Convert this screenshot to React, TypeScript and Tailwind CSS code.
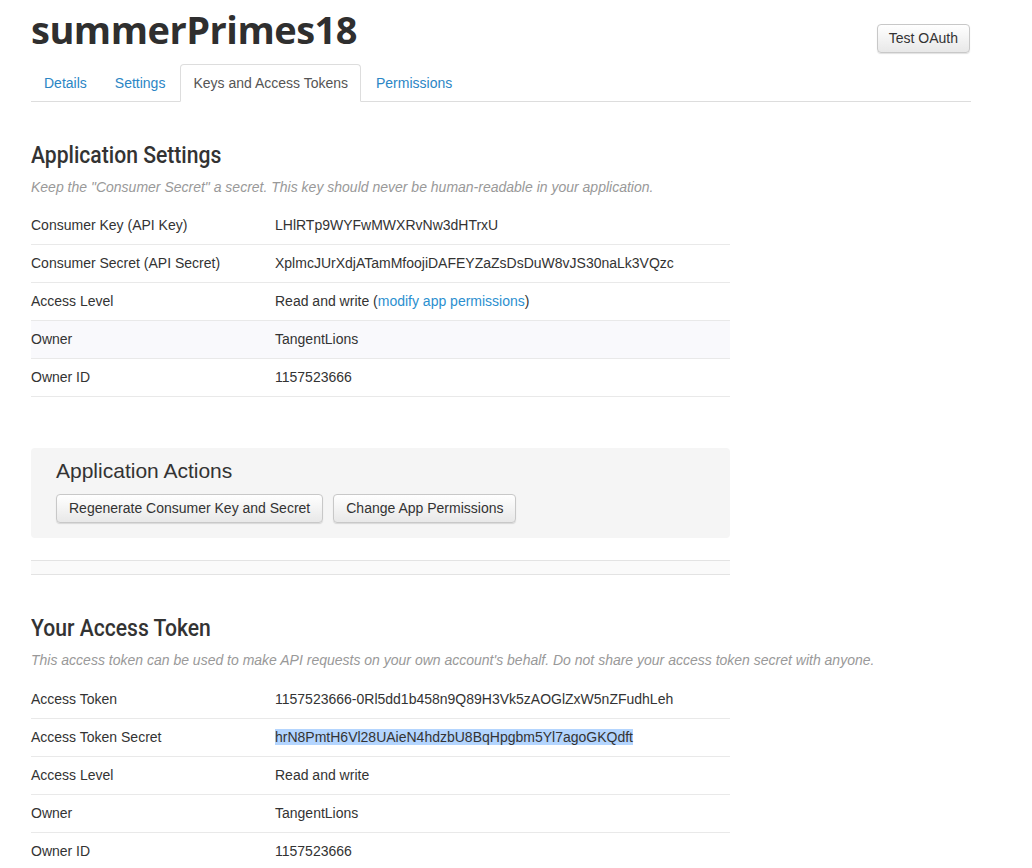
import React from "react";

const body = { fontFamily: '"Liberation Sans", Arial, sans-serif' };

function Row({
  label,
  children,
  shaded = false,
}: {
  label: string;
  children: React.ReactNode;
  shaded?: boolean;
}) {
  return (
    <div
      className={`flex h-[38px] items-center border-b border-[#e9e9e9] text-[14px] text-[#333] ${
        shaded ? "bg-[#f9f9fc]" : ""
      }`}
    >
      <div className="w-[244px] shrink-0">{label}</div>
      <div>{children}</div>
    </div>
  );
}

function Btn({ children }: { children: React.ReactNode }) {
  return (
    <button className="h-[29px] rounded-[4px] border border-[#c8c8c8] bg-gradient-to-b from-[#ffffff] to-[#e8e8e8] px-[12px] text-[14px] text-[#333] shadow-[0_1px_1px_rgba(0,0,0,0.12)]">
      {children}
    </button>
  );
}

function SectionHead({ children }: { children: React.ReactNode }) {
  return (
    <h2
      className="inline-block origin-left scale-x-[0.88] text-[24px] leading-[28px] font-medium text-[#333]"
      style={{ fontFamily: 'Roboto, "Liberation Sans", sans-serif' }}
    >
      {children}
    </h2>
  );
}

export default function App() {
  return (
    <div className="min-h-[868px] bg-white" style={body}>
      <div className="ml-[31px] w-[940px]">
        {/* Header */}
        <div className="flex items-start justify-between pt-[5px]">
          <h1
            className="text-[38px] leading-[48px] font-bold tracking-[-0.5px] text-[#2f2f2f]"
            style={{ fontFamily: '"Open Sans", "Liberation Sans", sans-serif' }}
          >
            summerPrimes18
          </h1>
          <div className="mt-[19px] mr-[1px]">
            <button className="h-[29px] rounded-[4px] border border-[#c8c8c8] bg-gradient-to-b from-[#ffffff] to-[#e8e8e8] px-[11px] text-[14px] text-[#333] shadow-[0_1px_1px_rgba(0,0,0,0.12)]">
              Test OAuth
            </button>
          </div>
        </div>

        {/* Tabs */}
        <div className="mt-[11px] flex border-b border-[#dddddd] text-[14px]">
          <a className="mr-[2px] flex h-[37px] items-center px-[13px] pt-[1px] text-[#2b86c5]">Details</a>
          <a className="mr-[2px] flex h-[37px] items-center px-[13px] pt-[1px] text-[#2b86c5]">Settings</a>
          <a className="-mb-[1px] mr-[2px] flex h-[38px] items-center rounded-t-[4px] border border-b-white border-[#dddddd] bg-white px-[12px] pt-[1px] text-[#555]">
            Keys and Access Tokens
          </a>
          <a className="mr-[2px] flex h-[37px] items-center px-[13px] pt-[1px] text-[#2b86c5]">Permissions</a>
        </div>

        {/* Application Settings */}
        <div className="w-[699px]">
          <div className="mt-[39px] h-[28px]">
            <SectionHead>Application Settings</SectionHead>
          </div>
          <p className="mt-[9px] text-[14px] leading-[18px] whitespace-nowrap italic text-[#999]">
            Keep the "Consumer Secret" a secret. This key should never be human-readable in your application.
          </p>
          <div className="mt-[11px]">
            <Row label="Consumer Key (API Key)">LHlRTp9WYFwMWXRvNw3dHTrxU</Row>
            <Row label="Consumer Secret (API Secret)">XplmcJUrXdjATamMfoojiDAFEYZaZsDsDuW8vJS30naLk3VQzc</Row>
            <Row label="Access Level">
              Read and write (<a className="text-[#2b8fcf]">modify app permissions</a>)
            </Row>
            <Row label="Owner" shaded>
              TangentLions
            </Row>
            <Row label="Owner ID">1157523666</Row>
          </div>

          {/* Application Actions */}
          <div className="mt-[51px] rounded-[4px] bg-[#f5f5f5] px-[25px] pt-[11px] pb-[15px]">
            <h3 className="text-[21px] leading-[24px] text-[#333]">Application Actions</h3>
            <div className="mt-[11px] flex gap-[10px]">
              <Btn>Regenerate Consumer Key and Secret</Btn>
              <Btn>Change App Permissions</Btn>
            </div>
          </div>

          <div className="mt-[22px] h-[15px] border-y border-[#e3e3e3] bg-[#fafafa]" />

          {/* Your Access Token */}
          <div className="mt-[39px] h-[28px]">
            <SectionHead>Your Access Token</SectionHead>
          </div>
        </div>
        <p className="mt-[9px] text-[14px] leading-[18px] whitespace-nowrap italic text-[#999]">
          This access token can be used to make API requests on your own account's behalf. Do not share your access token secret with anyone.
        </p>
        <div className="mt-[12px] w-[699px]">
          <Row label="Access Token">1157523666-0Rl5dd1b458n9Q89H3Vk5zAOGlZxW5nZFudhLeh</Row>
          <Row label="Access Token Secret">
            <span className="bg-[#b4d5fe]">hrN8PmtH6Vl28UAieN4hdzbU8BqHpgbm5Yl7agoGKQdft</span>
          </Row>
          <Row label="Access Level">Read and write</Row>
          <Row label="Owner">TangentLions</Row>
          <Row label="Owner ID">1157523666</Row>
        </div>
      </div>
    </div>
  );
}
